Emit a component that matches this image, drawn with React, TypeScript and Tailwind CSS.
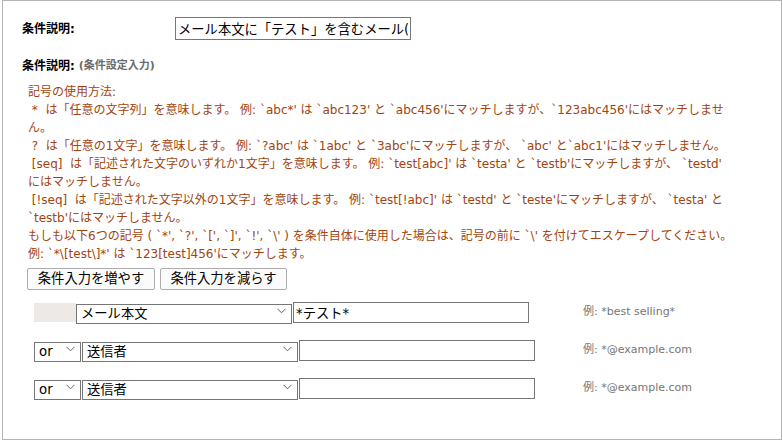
import React, { useState } from 'react';

const font = { fontFamily: '"DejaVu Sans", "Noto Sans CJK JP", sans-serif' };

const usageLines = [
  '記号の使用方法:',
  ' *  は「任意の文字列」を意味します。 例: `abc*\' は `abc123\' と `abc456\'にマッチしますが、`123abc456\'にはマッチしませ',
  'ん。',
  ' ?  は「任意の1文字」を意味します。 例: `?abc\' は `1abc\' と `3abc\'にマッチしますが、 `abc\' と`abc1\'にはマッチしません。',
  ' [seq]  は「記述された文字のいずれか1文字」を意味します。 例: `test[abc]\' は `testa\' と `testb\'にマッチしますが、 `testd\'',
  'にはマッチしません。',
  ' [!seq]  は「記述された文字以外の1文字」を意味します。 例: `test[!abc]\' は `testd\' と `teste\'にマッチしますが、 `testa\' と',
  '`testb\'にはマッチしません。',
  'もしも以下6つの記号 ( `*\', `?\', `[\', `]\', `!\', `\\\' ) を条件自体に使用した場合は、記号の前に `\\\' を付けてエスケープしてください。',
  '例: `*\\[test\\]*\' は `123[test]456\'にマッチします。',
];

const fields = ['メール本文', '送信者', '件名', '宛先'];

const Chevron = () => (
  <svg
    className="pointer-events-none absolute right-[6px] top-1/2 -translate-y-1/2"
    width="9"
    height="6"
    viewBox="0 0 9 6"
    fill="none"
  >
    <path d="M0.5 0.8 L4.5 4.8 L8.5 0.8" stroke="#606060" strokeWidth="1" />
  </svg>
);

const Select = ({ value, options, width }: { value: string; options: string[]; width: string }) => (
  <div className={`relative ${width} h-[20px]`}>
    <select
      defaultValue={value}
      style={font}
      className="w-full h-full appearance-none border border-[#767676] bg-white pl-[4px] pr-[18px] text-[13.3px] leading-none text-black outline-none"
    >
      {options.map((o) => (
        <option key={o}>{o}</option>
      ))}
    </select>
    <Chevron />
  </div>
);

type Row = { op: string | null; field: string; value: string; hint: string };

const App = () => {
  const [rows, setRows] = useState<Row[]>([
    { op: null, field: 'メール本文', value: '*テスト*', hint: '例: *best selling*' },
    { op: 'or', field: '送信者', value: '', hint: '例: *@example.com' },
    { op: 'or', field: '送信者', value: '', hint: '例: *@example.com' },
  ]);

  const addRow = () =>
    setRows((prev) => [...prev, { op: 'or', field: '送信者', value: '', hint: '例: *@example.com' }]);
  const removeRow = () => setRows((prev) => (prev.length > 1 ? prev.slice(0, -1) : prev));

  return (
    <div className="w-[783px] h-[441px] bg-white overflow-hidden" style={font}>
      <div className="ml-[2px] w-[780px] h-[440px] border border-[#b4b4b4] text-black">
        {/* title */}
        <div className="flex items-center pl-[19px] pt-[16px]">
          <span className="w-[153px] text-[12px] font-bold">条件説明:</span>
          <input
            defaultValue="メール本文に「テスト」を含むメール(本文)"
            style={font}
            className="w-[236px] h-[23px] border border-[#767676] px-[2px] text-[13.3px] outline-none"
          />
        </div>

        <div className="pl-[19px] mt-[17px] h-[18px] flex items-center gap-[4px]">
          <span className="text-[12px] font-bold">条件説明:</span>
          <span className="text-[11px] font-bold text-[#6b6b6b]">(条件設定入力)</span>
        </div>

        {/* symbol usage notes */}
        <div className="pl-[25px] mt-[8px] text-[12px] leading-[18px] text-[#a2440f]">
          {usageLines.map((line, i) => (
            <div key={i} className="whitespace-pre">
              {line}
            </div>
          ))}
        </div>

        <div className="flex gap-[5px] pl-[24px] mt-[5px]">
          <button
            onClick={addRow}
            style={font}
            className="w-[128px] h-[22px] border border-[#adadad] rounded-[2px] bg-[#fbfbfb] text-[13.3px] leading-none"
          >
            条件入力を増やす
          </button>
          <button
            onClick={removeRow}
            style={font}
            className="w-[127px] h-[22px] border border-[#adadad] rounded-[2px] bg-[#fbfbfb] text-[13.3px] leading-none"
          >
            条件入力を減らす
          </button>
        </div>

        {/* condition rows */}
        <div className="flex flex-col gap-[18px] pl-[31px] mt-[11px]">
          {rows.map((row, i) => (
            <div key={i} className="flex items-start h-[20px]">
              <div className="w-[549px] flex items-start">
                {row.op ? (
                  <>
                    <Select value={row.op} options={['or', 'and']} width="w-[47px]" />
                    <div className="w-[1px]" />
                    <Select value={row.field} options={fields} width="w-[216px]" />
                    <input
                      defaultValue={row.value}
                      style={font}
                      className="ml-[1px] mt-[1px] w-[236px] h-[21px] border border-[#767676] px-[2px] text-[13.3px] outline-none"
                    />
                  </>
                ) : (
                  <>
                    <div className="w-[42px] h-[19px] mt-[2px] bg-[#ece9e6]" />
                    <Select value={row.field} options={fields} width="w-[216px]" />
                    <input
                      defaultValue={row.value}
                      style={font}
                      className="ml-[1px] mt-[1px] w-[236px] h-[21px] border border-[#767676] px-[2px] text-[13.3px] outline-none"
                    />
                  </>
                )}
              </div>
              <span className="mt-[2px] text-[11px] leading-[18px] text-[#767676]">{row.hint}</span>
            </div>
          ))}
        </div>
      </div>
    </div>
  );
};

export default App;
